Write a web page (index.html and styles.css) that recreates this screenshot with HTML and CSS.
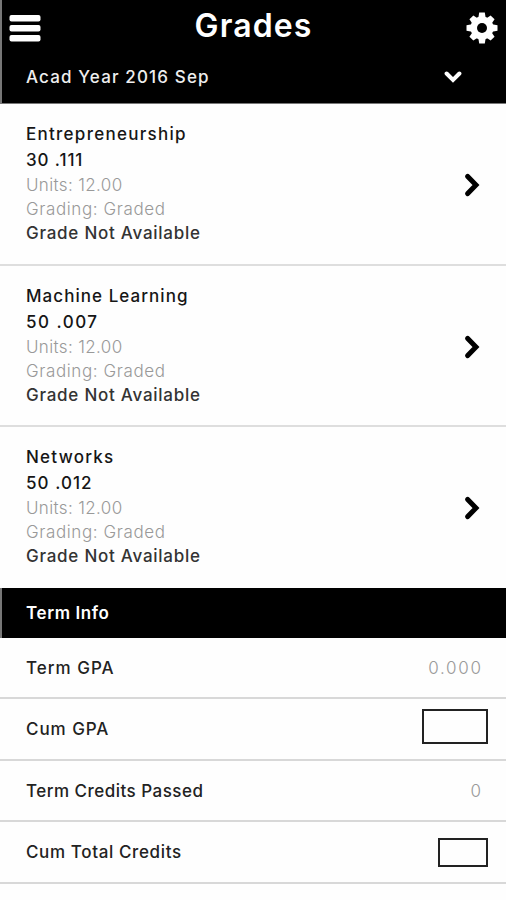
FILE: index.html
```html
<!DOCTYPE html>
<html lang="en">
<head>
<meta charset="utf-8">
<title>Grades</title>
<link rel="stylesheet" href="styles.css">
</head>
<body>
<header class="header">
  <div class="topbar">
    <svg class="menu" viewBox="0 0 32 27" width="32" height="27"><g fill="#fff"><rect x=".5" y="0" width="31" height="6.4" rx="2"/><rect x=".5" y="10" width="31" height="6.4" rx="2"/><rect x=".5" y="20" width="31" height="6.4" rx="2"/></g></svg>
    <h1 class="title"><span class="t-title">Grades</span></h1>
    <svg class="gear" viewBox="-16 -16 32 32" width="32" height="32"><g fill="#fff"><circle r="11.5"/><path d="M-3.7-10L-2.8-15.5H2.8L3.7-10V10L2.8 15.5H-2.8L-3.7 10Z"/><path transform="rotate(45)" d="M-3.7-10L-2.8-15H2.8L3.7-10V10L2.8 15H-2.8L-3.7 10Z"/><path transform="rotate(90)" d="M-3.7-10L-2.8-15.5H2.8L3.7-10V10L2.8 15.5H-2.8L-3.7 10Z"/><path transform="rotate(135)" d="M-3.7-10L-2.8-15H2.8L3.7-10V10L2.8 15H-2.8L-3.7 10Z"/></g><circle r="5" fill="#000"/></svg>
  </div>
  <div class="year"><span class="t-year">Acad Year 2016 Sep</span>
    <svg viewBox="0 0 18 12" width="18" height="12"><path d="M2.6 2.5L9 9L15.4 2.5" fill="none" stroke="#fff" stroke-width="4" stroke-linecap="round"/></svg>
  </div>
</header>
<main>
  <section class="course">
    <div class="details"><h2 class="t-ent">Entrepreneurship</h2><p class="code t-c1">30 .111</p><p class="light t-units">Units: 12.00</p><p class="light t-grading">Grading: Graded</p><p class="grade t-grade">Grade Not Available</p></div>
    <svg class="arrow" viewBox="0 0 16 24" width="16" height="24"><path d="M3.7 3.4L12 12L3.7 20.6" fill="none" stroke="#000" stroke-width="5" stroke-linecap="round"/></svg>
  </section>
  <section class="course">
    <div class="details"><h2 class="t-ml">Machine Learning</h2><p class="code t-c2">50 .007</p><p class="light t-units">Units: 12.00</p><p class="light t-grading">Grading: Graded</p><p class="grade t-grade">Grade Not Available</p></div>
    <svg class="arrow" viewBox="0 0 16 24" width="16" height="24"><path d="M3.7 3.4L12 12L3.7 20.6" fill="none" stroke="#000" stroke-width="5" stroke-linecap="round"/></svg>
  </section>
  <section class="course last">
    <div class="details"><h2 class="t-net">Networks</h2><p class="code t-c3">50 .012</p><p class="light t-units">Units: 12.00</p><p class="light t-grading">Grading: Graded</p><p class="grade t-grade">Grade Not Available</p></div>
    <svg class="arrow" viewBox="0 0 16 24" width="16" height="24"><path d="M3.7 3.4L12 12L3.7 20.6" fill="none" stroke="#000" stroke-width="5" stroke-linecap="round"/></svg>
  </section>
  <h2 class="term"><span class="t-term">Term Info</span></h2>
  <div class="row"><span class="t-r1">Term GPA</span><span class="value t-v1">0.000</span></div>
  <div class="row"><span class="t-r2">Cum GPA</span><span class="box wide"></span></div>
  <div class="row"><span class="t-r3">Term Credits Passed</span><span class="value">0</span></div>
  <div class="row"><span class="t-r4">Cum Total Credits</span><span class="box small"></span></div>
</main>
</body>
</html>
```
FILE: styles.css
```css
* { box-sizing: border-box; margin: 0; padding: 0; }
body { width: 506px; height: 900px; overflow: hidden; background: #fefefe; color: #161616; font: 500 17px/24px Inter, "Liberation Sans", sans-serif; white-space: nowrap; }
svg { display: block; flex: none; }
.header { height: 104px; background: #000; color: #fff; border-left: 2px solid #777; border-bottom: 1px solid #777; }
.topbar { height: 53px; display: grid; grid-template-columns: 32px 1fr 32px; padding: 0 8px 0 7px; }
.menu { margin-top: 15px; }
.gear { margin-top: 12px; }
.title { text-align: center; font-size: 32px; font-weight: 600; line-height: 52px; }
.year { display: flex; justify-content: space-between; align-items: center; height: 48px; padding: 0 44px 0 24px; color: #eee; }
.course { height: 161.6px; display: flex; justify-content: space-between; padding: 17px 26px 0; border-bottom: 2px solid #dedede; }
.course.last { height: 160.8px; border-bottom: 0; }
.course h2 { font-size: 17px; font-weight: 500; line-height: 26px; }
.code { line-height: 26px; }
.light { color: #999; font-weight: 300; }
.grade { color: #333; }
.arrow { margin-top: 52px; }
.term { height: 50px; background: #000; color: #fff; border-left: 2px solid #777; padding-left: 24px; font-size: 17px; font-weight: 600; line-height: 50px; }
.row { height: 61.5px; display: flex; justify-content: space-between; align-items: center; padding: 0 25px 0 26px; border-bottom: 2px solid #d8d8d8; color: #222; }
.value { color: #999; font-weight: 300; }
.box { border: 2px solid #222; margin-right: -7px; }
.wide { width: 66px; height: 35px; margin-top: -6px; }
.small { width: 50px; height: 29px; }
.t-title { letter-spacing: 1.1px; }
.t-year { letter-spacing: 1.15px; }
.t-ent { letter-spacing: 1.27px; }
.t-ml { letter-spacing: 1.05px; }
.t-net { letter-spacing: 1.25px; }
.t-c1 { letter-spacing: .9px; }
.t-c2 { letter-spacing: 1.5px; }
.t-c3 { letter-spacing: 1.05px; }
.t-units { letter-spacing: .36px; }
.t-grading { letter-spacing: .6px; }
.t-grade { letter-spacing: .75px; }
.t-term { letter-spacing: .6px; }
.t-r1 { letter-spacing: 1px; }
.t-r2 { letter-spacing: .95px; }
.t-r3 { letter-spacing: .48px; }
.t-r4 { letter-spacing: .63px; }
.t-v1 { letter-spacing: 1.7px; margin-right: -1.7px; }
```
